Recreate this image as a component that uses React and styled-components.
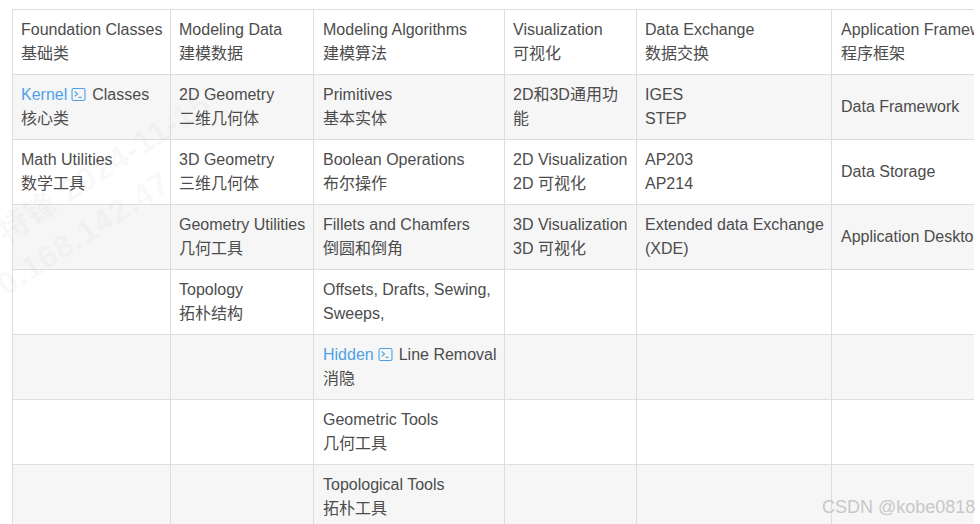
import styled, { createGlobalStyle } from "styled-components";

const GlobalStyle = createGlobalStyle`
  html, body {
    margin: 0;
    padding: 0;
    background: #fff;
  }
`;

const Page = styled.div`
  position: relative;
  width: 980px;
  height: 524px;
  overflow: hidden;
  background: #fff;
`;

const TableClip = styled.div`
  width: 962px;
  height: 515px;
  margin-left: 12px;
  padding-top: 9px;
  overflow: hidden;
`;

const Table = styled.table`
  table-layout: fixed;
  width: 1000px;
  border-collapse: collapse;
  font-family: "Liberation Sans", "Noto Sans CJK SC", sans-serif;
  font-size: 16px;
  line-height: 24px;
  color: #4c4c4c;
`;

const Row = styled.tr`
  background: ${(props) => (props.$alt ? "#f6f6f6" : "#fff")};
`;

const Cell = styled.td`
  height: 48px;
  padding: 8px;
  border: 1px solid #ddd;
  vertical-align: middle;
  white-space: nowrap;
  overflow: hidden;

  &:nth-child(3),
  &:nth-child(6) {
    padding-left: 9px;
  }
`;

const DocLink = styled.a`
  color: #4ea1e8;
  text-decoration: none;
`;

const LinkIcon = styled.svg`
  width: 15px;
  height: 15px;
  margin: 0 6px 0 4px;
  vertical-align: -2px;
`;

const Watermark = styled.div`
  position: absolute;
  left: -36px;
  top: 232px;
  transform-origin: 0 0;
  transform: rotate(-33deg);
  font-family: "Liberation Sans", "Noto Sans CJK SC", sans-serif;
  font-size: 32px;
  line-height: 44px;
  font-weight: 700;
  letter-spacing: 1px;
  color: rgba(60, 60, 60, 0.045);
  white-space: nowrap;
  pointer-events: none;
`;

const WatermarkLine = styled.div`
  margin-left: ${(props) => props.$indent}px;
`;

const Credit = styled.div`
  position: absolute;
  left: 822px;
  bottom: 6px;
  font-family: "Liberation Sans", sans-serif;
  font-size: 18px;
  line-height: 22px;
  color: #c8c8c8;
  white-space: nowrap;
`;

const columns = [158, 143, 191, 132, 195, 181];

const Lines = ({ top, bottom }) => (
  <>
    {top}
    <br />
    {bottom}
  </>
);

const Terminal = () => (
  <LinkIcon viewBox="0 0 16 16" fill="none" stroke="#4ea1e8" strokeWidth="1.2">
    <rect x="1.1" y="1.6" width="13.8" height="12.8" rx="1.6" />
    <path d="M4 4.8 L7 7.4 L4 10" />
    <path d="M8 11 H11.5" />
  </LinkIcon>
);

const rows = [
  [
    <Lines top="Foundation Classes" bottom="基础类" />,
    <Lines top="Modeling Data" bottom="建模数据" />,
    <Lines top="Modeling Algorithms" bottom="建模算法" />,
    <Lines top="Visualization" bottom="可视化" />,
    <Lines top="Data Exchange" bottom="数据交换" />,
    <Lines top="Application Framework" bottom="程序框架" />,
  ],
  [
    <Lines
      top={
        <>
          <DocLink>Kernel</DocLink>
          <Terminal />
          Classes
        </>
      }
      bottom="核心类"
    />,
    <Lines top="2D Geometry" bottom="二维几何体" />,
    <Lines top="Primitives" bottom="基本实体" />,
    <Lines top="2D和3D通用功" bottom="能" />,
    <Lines top="IGES" bottom="STEP" />,
    "Data Framework",
  ],
  [
    <Lines top="Math Utilities" bottom="数学工具" />,
    <Lines top="3D Geometry" bottom="三维几何体" />,
    <Lines top="Boolean Operations" bottom="布尔操作" />,
    <Lines top="2D Visualization" bottom="2D 可视化" />,
    <Lines top="AP203" bottom="AP214" />,
    "Data Storage",
  ],
  [
    "",
    <Lines top="Geometry Utilities" bottom="几何工具" />,
    <Lines top="Fillets and Chamfers" bottom="倒圆和倒角" />,
    <Lines top="3D Visualization" bottom="3D 可视化" />,
    <Lines top="Extended data Exchange" bottom="(XDE)" />,
    "Application Desktop",
  ],
  [
    "",
    <Lines top="Topology" bottom="拓朴结构" />,
    <Lines top="Offsets, Drafts, Sewing," bottom="Sweeps," />,
    "",
    "",
    "",
  ],
  [
    "",
    "",
    <Lines
      top={
        <>
          <DocLink>Hidden</DocLink>
          <Terminal />
          Line Removal
        </>
      }
      bottom="消隐"
    />,
    "",
    "",
    "",
  ],
  ["", "", <Lines top="Geometric Tools" bottom="几何工具" />, "", "", ""],
  ["", "", <Lines top="Topological Tools" bottom="拓朴工具" />, "", "", ""],
];

export default function App() {
  return (
    <Page>
      <GlobalStyle />
      <TableClip>
        <Table>
          <colgroup>
            {columns.map((width, i) => (
              <col key={i} width={width} />
            ))}
          </colgroup>
          <tbody>
            {rows.map((cells, i) => (
              <Row key={i} $alt={i % 2 === 1}>
                {cells.map((cell, j) => (
                  <Cell key={j}>{cell}</Cell>
                ))}
              </Row>
            ))}
          </tbody>
        </Table>
      </TableClip>
      <Watermark>
        <WatermarkLine $indent={28}>特锋 2024-11-15</WatermarkLine>
        <WatermarkLine $indent={0}>0.168.142.47</WatermarkLine>
      </Watermark>
      <Credit>CSDN @kobe0818</Credit>
    </Page>
  );
}
